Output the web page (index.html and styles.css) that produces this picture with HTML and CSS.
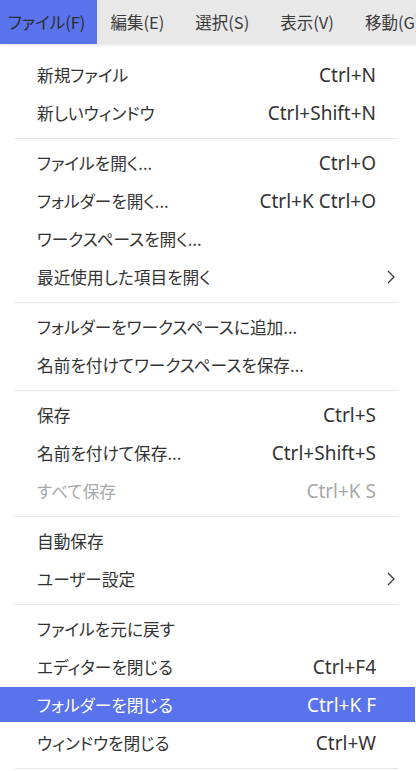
FILE: index.html
```html
<!DOCTYPE html>
<html lang="ja">
<head>
<meta charset="utf-8">
<link rel="stylesheet" href="styles.css">
</head>
<body>
<div class="menubar">
  <div class="top active">ファイル(F)</div>
  <div class="top">編集(E)</div>
  <div class="top">選択(S)</div>
  <div class="top">表示(V)</div>
  <div class="top">移動(G)</div>
</div>
<div class="menu">
  <div class="item"><span class="label">新規ファイル</span><span class="key">Ctrl+N</span><span class="sub"></span></div>
  <div class="item"><span class="label">新しいウィンドウ</span><span class="key">Ctrl+Shift+N</span><span class="sub"></span></div>
  <div class="sep"></div>
  <div class="item"><span class="label">ファイルを開く...</span><span class="key">Ctrl+O</span><span class="sub"></span></div>
  <div class="item"><span class="label">フォルダーを開く...</span><span class="key">Ctrl+K Ctrl+O</span><span class="sub"></span></div>
  <div class="item"><span class="label">ワークスペースを開く...</span><span class="key"></span><span class="sub"></span></div>
  <div class="item"><span class="label">最近使用した項目を開く</span><span class="key"></span><span class="sub"><svg width="8" height="14" viewBox="0 0 8 14"><polyline points="1,1 7,7 1,13" fill="none" stroke="#333" stroke-width="1.2"/></svg></span></div>
  <div class="sep"></div>
  <div class="item"><span class="label">フォルダーをワークスペースに追加...</span><span class="key"></span><span class="sub"></span></div>
  <div class="item"><span class="label">名前を付けてワークスペースを保存...</span><span class="key"></span><span class="sub"></span></div>
  <div class="sep"></div>
  <div class="item"><span class="label">保存</span><span class="key">Ctrl+S</span><span class="sub"></span></div>
  <div class="item"><span class="label">名前を付けて保存...</span><span class="key">Ctrl+Shift+S</span><span class="sub"></span></div>
  <div class="item disabled"><span class="label">すべて保存</span><span class="key">Ctrl+K S</span><span class="sub"></span></div>
  <div class="sep"></div>
  <div class="item"><span class="label">自動保存</span><span class="key"></span><span class="sub"></span></div>
  <div class="item"><span class="label">ユーザー設定</span><span class="key"></span><span class="sub"><svg width="8" height="14" viewBox="0 0 8 14"><polyline points="1,1 7,7 1,13" fill="none" stroke="#333" stroke-width="1.2"/></svg></span></div>
  <div class="sep"></div>
  <div class="item"><span class="label">ファイルを元に戻す</span><span class="key"></span><span class="sub"></span></div>
  <div class="item"><span class="label">エディターを閉じる</span><span class="key">Ctrl+F4</span><span class="sub"></span></div>
  <div class="item selected"><span class="label">フォルダーを閉じる</span><span class="key">Ctrl+K F</span><span class="sub"></span></div>
  <div class="item"><span class="label">ウィンドウを閉じる</span><span class="key">Ctrl+W</span><span class="sub"></span></div>
  <div class="sep"></div>
</div>
</body>
</html>
```
FILE: styles.css
```css
html, body {
  margin: 0;
  padding: 0;
  background: #ffffff;
  overflow: hidden;
}
body {
  width: 416px;
  height: 771px;
  font-family: "Noto Sans CJK JP", sans-serif;
  font-feature-settings: "palt";
  color: #333333;
}
.menubar {
  display: flex;
  height: 44px;
  background: #e8e8e8;
  box-shadow: 0 1px 3px rgba(0, 0, 0, 0.12);
  position: relative;
  white-space: nowrap;
  overflow: hidden;
}
.top {
  display: flex;
  align-items: center;
  padding: 0 18px 0 13px;
  font-size: 16.5px;
  color: #3a3a3a;
  flex: none;
}
.top.active {
  background: #5873eb;
  color: #2c2c2c;
  padding: 0 12px 0 8px;
}
.menu {
  display: flex;
  flex-direction: column;
  padding-top: 13px;
}
.item {
  display: flex;
  align-items: center;
  height: 35px;
  margin-bottom: 3px;
  padding-left: 37px;
  padding-right: 9px;
  font-size: 16.7px;
  color: #333333;
  margin-right: 1px;
}
.label {
  flex: 1;
  white-space: nowrap;
}
.key {
  white-space: nowrap;
  font-family: "Noto Sans", sans-serif;
  font-size: 19px;
}
.sub {
  width: 30px;
  display: flex;
  justify-content: center;
  align-items: center;
}
.item.disabled {
  color: #a8a8a8;
}
.item.selected {
  background: #5873eb;
  color: #ffffff;
}
.sep {
  height: 1px;
  background: #e6e6e6;
  margin: 5px 18px 6px 15px;
}
```
